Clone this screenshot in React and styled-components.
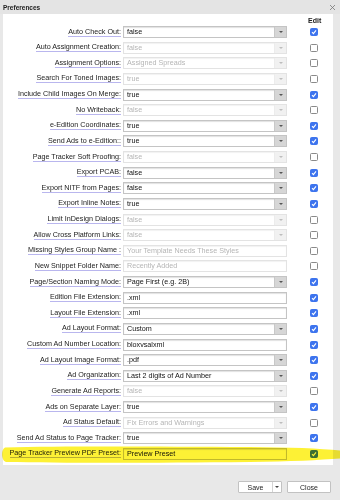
import React from "react";
import styled, { createGlobalStyle } from "styled-components";

const Global = createGlobalStyle`
  html, body { margin: 0; padding: 0; background: #e8e8e8; }
  body { font-family: "Liberation Sans", Arial, sans-serif; }
`;

const Page = styled.div`
  position: relative;
  width: 340px;
  height: 500px;
  background: #e8e8e8;
  display: flex;
  flex-direction: column;
  overflow: hidden;
`;

const TitleBar = styled.div`
  height: 14px;
  display: flex;
  align-items: center;
  justify-content: space-between;
  padding: 0 4px 0 3px;
  background: #e4e4e4;
`;

const Title = styled.span`
  font-size: 6.5px;
  font-weight: bold;
  color: #222;
`;

const CloseX = styled.svg`
  width: 7px;
  height: 7px;
`;

const Panel = styled.div`
  height: 451px;
  margin: 0 7px 0 3px;
  background: #fff;
  display: grid;
  grid-template-columns: 120px 164px 1fr;
  grid-template-rows: 10.2px;
  grid-auto-rows: 15.63px;
  align-content: start;
`;

const HeaderCell = styled.div`
  grid-column: 3;
  padding-left: 21px;
  padding-top: 3px;
  font-size: 7px;
  font-weight: bold;
  color: #222;
`;

const LabelCell = styled.div`
  grid-column: 1;
  display: flex;
  justify-content: flex-end;
  align-items: center;
  padding-right: 2px;
`;

const Label = styled.span`
  font-size: 7.2px;
  line-height: 8px;
  color: #222;
  white-space: nowrap;
  border-bottom: 1px solid #b9b6ee;
`;

const FieldCell = styled.div`
  grid-column: 2;
  display: flex;
  align-items: center;
`;

const Field = styled.div`
  flex: 1;
  height: 12px;
  box-sizing: border-box;
  display: flex;
  align-items: stretch;
  border: 1px solid ${(p) => (p.$disabled ? "#e3e3e3" : "#c4c4c4")};
  box-shadow: ${(p) => (p.$disabled ? "inset 0 1px 1px #f2f2f2" : "inset 0 1px 1px #e2e2e2")};
  background: #fff;
`;

const Value = styled.span`
  flex: 1;
  padding-left: 3px;
  font-size: 7.2px;
  line-height: 10px;
  color: ${(p) => (p.$disabled ? "#b5b5b5" : "#111")};
  white-space: nowrap;
  overflow: hidden;
`;

const Arrow = styled.span`
  width: 11px;
  display: flex;
  align-items: center;
  justify-content: center;
  background: ${(p) => (p.$disabled ? "#f1f1f1" : "#d6d6d6")};
  border-left: 1px solid ${(p) => (p.$disabled ? "#ececec" : "#c8c8c8")};
  &::after {
    content: "";
    border-left: 2px solid transparent;
    border-right: 2px solid transparent;
    border-top: 2px solid ${(p) => (p.$disabled ? "#bdbdbd" : "#555")};
  }
`;

const CheckCell = styled.div`
  grid-column: 3;
  display: flex;
  align-items: center;
  padding-left: 23px;
`;

const Box = styled.span`
  width: 8px;
  height: 8px;
  box-sizing: border-box;
  border-radius: 1.5px;
  display: flex;
  align-items: center;
  justify-content: center;
  background: ${(p) => (p.$checked ? "#3d74ee" : "#fff")};
  border: 1px solid ${(p) => (p.$checked ? "#3d74ee" : "#8a8a8a")};
`;

const Footer = styled.div`
  flex: 1;
  display: flex;
  justify-content: flex-end;
  align-items: flex-start;
  gap: 5px;
  padding: 16px 9px 0 0;
`;

const Button = styled.div`
  width: 44px;
  height: 12px;
  box-sizing: border-box;
  display: flex;
  align-items: stretch;
  background: #fff;
  border: 1px solid #c2c2c2;
  border-radius: 1px;
  font-size: 7px;
  color: #222;
`;

const ButtonText = styled.span`
  flex: 1;
  display: flex;
  align-items: center;
  justify-content: center;
`;

const ButtonDrop = styled.span`
  width: 8px;
  display: flex;
  align-items: center;
  justify-content: center;
  border-left: 1px solid #d4d4d4;
  &::after {
    content: "";
    border-left: 2px solid transparent;
    border-right: 2px solid transparent;
    border-top: 2px solid #444;
  }
`;

const Highlight = styled.svg`
  position: absolute;
  left: 0;
  top: 445px;
  width: 340px;
  height: 20px;
  mix-blend-mode: multiply;
  pointer-events: none;
`;

const rows = [
  ["Auto Check Out:", "false", "s", 1, 1],
  ["Auto Assignment Creation:", "false", "s", 0, 0],
  ["Assignment Options:", "Assigned Spreads", "s", 0, 0],
  ["Search For Toned Images:", "true", "s", 0, 0],
  ["Include Child Images On Merge:", "true", "s", 1, 1],
  ["No Writeback:", "false", "s", 0, 0],
  ["e-Edition Coordinates:", "true", "s", 1, 1],
  ["Send Ads to e-Edition::", "true", "s", 1, 1],
  ["Page Tracker Soft Proofing:", "false", "s", 0, 0],
  ["Export PCAB:", "false", "s", 1, 1],
  ["Export NITF from Pages:", "false", "s", 1, 1],
  ["Export Inline Notes:", "true", "s", 1, 1],
  ["Limit InDesign Dialogs:", "false", "s", 0, 0],
  ["Allow Cross Platform Links:", "false", "s", 0, 0],
  ["Missing Styles Group Name :", "Your Template Needs These Styles", "t", 0, 0],
  ["New Snippet Folder Name:", "Recently Added", "t", 0, 0],
  ["Page/Section Naming Mode:", "Page First (e.g. 2B)", "s", 1, 1],
  ["Edition File Extension:", ".xml", "t", 1, 1],
  ["Layout File Extension:", ".xml", "t", 1, 1],
  ["Ad Layout Format:", "Custom", "s", 1, 1],
  ["Custom Ad Number Location:", "bloxvsalxml", "t", 1, 1],
  ["Ad Layout Image Format:", ".pdf", "s", 1, 1],
  ["Ad Organization:", "Last 2 digits of Ad Number", "s", 1, 1],
  ["Generate Ad Reports:", "false", "s", 0, 0],
  ["Ads on Separate Layer:", "true", "s", 1, 1],
  ["Ad Status Default:", "Fix Errors and Warnings", "s", 0, 0],
  ["Send Ad Status to Page Tracker:", "true", "s", 1, 1],
  ["Page Tracker Preview PDF Preset:", "Preview Preset", "t", 1, 1],
];

function Check({ checked }) {
  return (
    <Box $checked={checked}>
      {checked && (
        <svg width="6" height="6" viewBox="0 0 6 6">
          <path d="M1 3.2 L2.4 4.6 L5 1.4" fill="none" stroke="#fff" strokeWidth="1.1" />
        </svg>
      )}
    </Box>
  );
}

export default function App() {
  return (
    <Page>
      <Global />
      <TitleBar>
        <Title>Preferences</Title>
        <CloseX viewBox="0 0 7 7">
          <path d="M1 1 L6 6 M6 1 L1 6" stroke="#777" strokeWidth="0.8" />
        </CloseX>
      </TitleBar>
      <Panel>
        <HeaderCell>Edit</HeaderCell>
        {rows.map(([label, value, kind, enabled, checked]) => (
          <React.Fragment key={label}>
            <LabelCell>
              <Label>{label}</Label>
            </LabelCell>
            <FieldCell>
              <Field $disabled={!enabled}>
                <Value $disabled={!enabled}>{value}</Value>
                {kind === "s" && <Arrow $disabled={!enabled} />}
              </Field>
            </FieldCell>
            <CheckCell>
              <Check checked={!!checked} />
            </CheckCell>
          </React.Fragment>
        ))}
      </Panel>
      <Footer>
        <Button>
          <ButtonText>Save</ButtonText>
          <ButtonDrop />
        </Button>
        <Button>
          <ButtonText>Close</ButtonText>
        </Button>
      </Footer>
      <Highlight viewBox="0 0 340 20">
        <path
          d="M5 2.5 C60 1 150 1.5 250 2 C290 2.3 320 3.5 340 5.5 L340 13.5 C320 15 290 16.5 250 17 C150 18 60 18 6 17 C1 15.5 1 4 5 2.5 Z"
          fill="#fdf02a"
          opacity="0.95"
        />
      </Highlight>
    </Page>
  );
}
